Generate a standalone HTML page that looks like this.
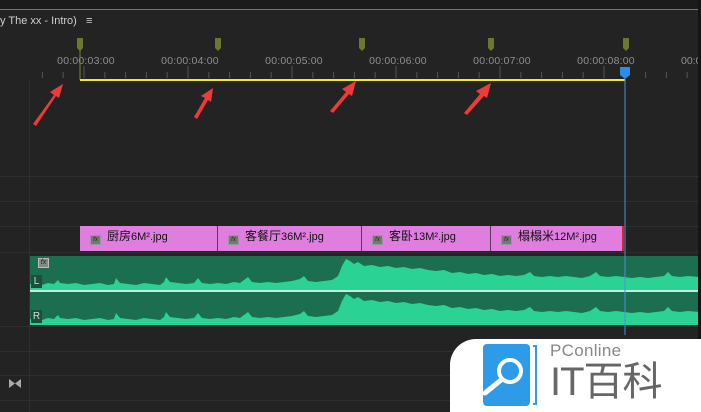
<!DOCTYPE html>
<html><head><meta charset="utf-8"><style>
*{margin:0;padding:0;box-sizing:border-box}
body{width:701px;height:412px;background:#232323;position:relative;overflow:hidden;font-family:"Liberation Sans","Noto Sans CJK SC",sans-serif}
.a{position:absolute}
.hl{position:absolute;left:0;width:698px;height:1px;background:#2f2f2f}
.t{position:absolute;top:55px;font-size:10.5px;color:#8f8f8f;width:80px;text-align:center;letter-spacing:0.2px}
.clip{position:absolute;top:226px;height:25px;background:#e07ee0;border-right:1px solid #5a3a5a;font-size:12px;color:#111;line-height:20px;white-space:nowrap}
.fx{display:inline-block;width:11px;height:10px;background:#777;border:1px solid #999;margin:0 6px 0 10px;vertical-align:-1px;font-size:6px;color:#222;font-style:italic;text-align:center;line-height:8px}
.cl{font-size:11px}
</style></head><body>
<div class="a" style="left:0;top:0;width:701px;height:9px;background:#1b1b1b"></div>
<div class="a" style="left:0;top:9px;width:698px;height:1px;background:#3b80c8"></div>
<div class="a" style="left:0;top:15px;font-size:11px;color:#cfcfcf">y The xx - Intro)&nbsp;&nbsp;&nbsp;≡</div>

<div class="t" style="left:46px">00:00:03:00</div>
<div class="t" style="left:150px">00:00:04:00</div>
<div class="t" style="left:254px">00:00:05:00</div>
<div class="t" style="left:358px">00:00:06:00</div>
<div class="t" style="left:462px">00:00:07:00</div>
<div class="t" style="left:566px">00:00:08:00</div>
<div class="a" style="left:681px;top:55px;width:17px;overflow:hidden;white-space:nowrap;font-size:10.5px;color:#8f8f8f">00:00:09:00</div>

<svg class="a" style="left:0;top:0" width="698" height="100">
<g stroke="#555" stroke-width="1">
<path d="M42.4 72V78M63.2 72V78M84 66V78M104.8 72V78M125.6 72V78M146.4 72V78M167.2 72V78M188 66V78M208.8 72V78M229.6 72V78M250.4 72V78M271.2 72V78M292 66V78M312.8 72V78M333.6 72V78M354.4 72V78M375.2 72V78M396 66V78M416.8 72V78M437.6 72V78M458.4 72V78M479.2 72V78M500 66V78M520.8 72V78M541.6 72V78M562.4 72V78M583.2 72V78M604 66V78M645.6 72V78M666.4 72V78M687.2 72V78"/>
</g>
<g fill="#6a7a2c">
<path d="M77 38H83V48L80 51L77 48Z"/><path d="M215 38H221V48L218 51L215 48Z"/><path d="M359 38H365V48L362 51L359 48Z"/><path d="M488 38H494V48L491 51L488 48Z"/><path d="M623 38H629V48L626 51L623 48Z"/>
</g>
<line x1="80" y1="50" x2="80" y2="80" stroke="#7a8a3a"/>
<rect x="80" y="79" width="545" height="2" fill="#f2ec1c"/>
</svg>

<div class="a" style="left:29px;top:80px;width:1px;height:332px;background:#2f2f2f"></div>
<div class="hl" style="top:176px"></div>
<div class="hl" style="top:201px"></div>
<div class="hl" style="top:226px"></div>
<div class="hl" style="top:252px"></div>
<div class="hl" style="top:326px"></div>
<div class="hl" style="top:351px"></div>
<div class="hl" style="top:375px"></div>
<div class="hl" style="top:400px"></div>

<div class="clip" style="left:80px;width:138px"><span class="fx">fx</span>厨房<span class="cl">6M².jpg</span></div>
<div class="clip" style="left:218px;width:144px"><span class="fx">fx</span>客餐厅<span class="cl">36M².jpg</span></div>
<div class="clip" style="left:362px;width:129px"><span class="fx">fx</span>客卧<span class="cl">13M².jpg</span></div>
<div class="clip" style="left:491px;width:133px;border-right:2px solid #e02020"><span class="fx">fx</span>榻榻米<span class="cl">12M².jpg</span></div>

<svg class="a" style="left:0;top:0" width="698" height="412">
<defs>
<path id="w" d="M30 290 L30 284 L36 283 L42 285 L48 283 L54 284 L58 280 L60 283 L68 284 L76 283 L84 285 L92 284 L100 283 L108 285 L114 284 L116 278 L120 283 L128 284 L136 285 L144 283 L152 284 L160 285 L164 282 L166 277 L170 282 L178 283 L186 284 L194 283 L198 278 L202 283 L210 284 L218 283 L226 284 L234 282 L240 283 L248 277 L252 282 L260 283 L268 282 L276 283 L284 282 L292 281 L300 279 L304 276 L308 281 L316 282 L324 281 L332 280 L338 276 L342 266 L346 259 L350 261 L354 264 L358 262 L364 266 L372 265 L380 267 L388 266 L396 268 L404 267 L412 269 L420 268 L428 270 L436 271 L444 270 L452 273 L460 272 L468 274 L476 273 L484 275 L492 274 L500 276 L508 275 L516 276 L524 275 L530 272 L534 276 L542 277 L550 276 L558 277 L566 276 L574 277 L582 278 L590 276 L596 272 L600 276 L608 277 L616 276 L624 277 L632 278 L640 277 L648 278 L656 277 L664 276 L668 272 L672 276 L680 277 L688 276 L700 277 L700 290Z"/>
</defs>
<rect x="30" y="256" width="670" height="34" fill="#1c6e50"/>
<use href="#w" fill="#2ad394"/>
<rect x="30" y="290" width="670" height="2" fill="#cfe8dd"/>
<rect x="30" y="292" width="670" height="33" fill="#1c6e50"/>
<use href="#w" fill="#2ad394" transform="translate(0,35)"/>
</svg>
<div class="a" style="left:38px;top:258px;width:11px;height:10px;background:#888;border:1px solid #bbb;font-size:7px;font-style:italic;color:#222;text-align:center;line-height:8px">fx</div>
<div class="a" style="left:31px;top:275px;width:11px;height:13px;background:#1a4f3c;color:#ddd;font-size:10px;text-align:center;line-height:13px">L</div>
<div class="a" style="left:31px;top:310px;width:11px;height:13px;background:#1a4f3c;color:#ddd;font-size:10px;text-align:center;line-height:13px">R</div>

<svg class="a" style="left:8px;top:378px" width="14" height="11"><path d="M1 1 L7 5.5 L1 10Z M13 1 L7 5.5 L13 10Z" fill="#aaa"/></svg>

<svg class="a" style="left:0;top:0" width="698" height="412">
<line x1="625" y1="70" x2="625" y2="335" stroke="#4a90d9" stroke-width="1"/>
<path d="M620 67 H630 V75 L625 79 L620 75Z" fill="#2f8be8"/>
<g fill="#f03a3a">
<path d="M33 124 L54 95 L50 92 L63 84 L59 98 L56 96 L36 126Z"/>
<path d="M194 117 L205 98 L201 96 L213 88 L211 102 L208 100 L197 119Z"/>
<path d="M330 111 L346 92 L342 89 L356 81 L352 96 L349 94 L333 113Z"/>
<path d="M464 113 L480 94 L476 91 L491 83 L487 98 L484 96 L467 115Z"/>
</g>
</svg>

<div class="a" style="left:450px;top:339px;width:251px;height:73px;background:#fff;border-top-left-radius:26px"></div>
<div class="a" style="left:698px;top:0;width:3px;height:339px;background:#151515"></div>
<svg class="a" style="left:480px;top:342px" width="62" height="66">
<rect x="3" y="2" width="47" height="62" rx="4" fill="#2d9be8"/>
<path d="M53 4 h3 v58 h-3" fill="none" stroke="#2d9be8" stroke-width="2"/>
<circle cx="30" cy="29" r="11" fill="none" stroke="#fff" stroke-width="4"/>
<line x1="21" y1="38" x2="5" y2="51" stroke="#fff" stroke-width="5" stroke-linecap="round"/>
</svg>
<div class="a" style="left:550px;top:341px;font-size:17px;color:#888;letter-spacing:0.3px">PConline</div>
<div class="a" style="left:550px;top:358px;font-size:40px;line-height:48px;color:#666;letter-spacing:-1px;white-space:nowrap">IT百科</div>
</body></html>
